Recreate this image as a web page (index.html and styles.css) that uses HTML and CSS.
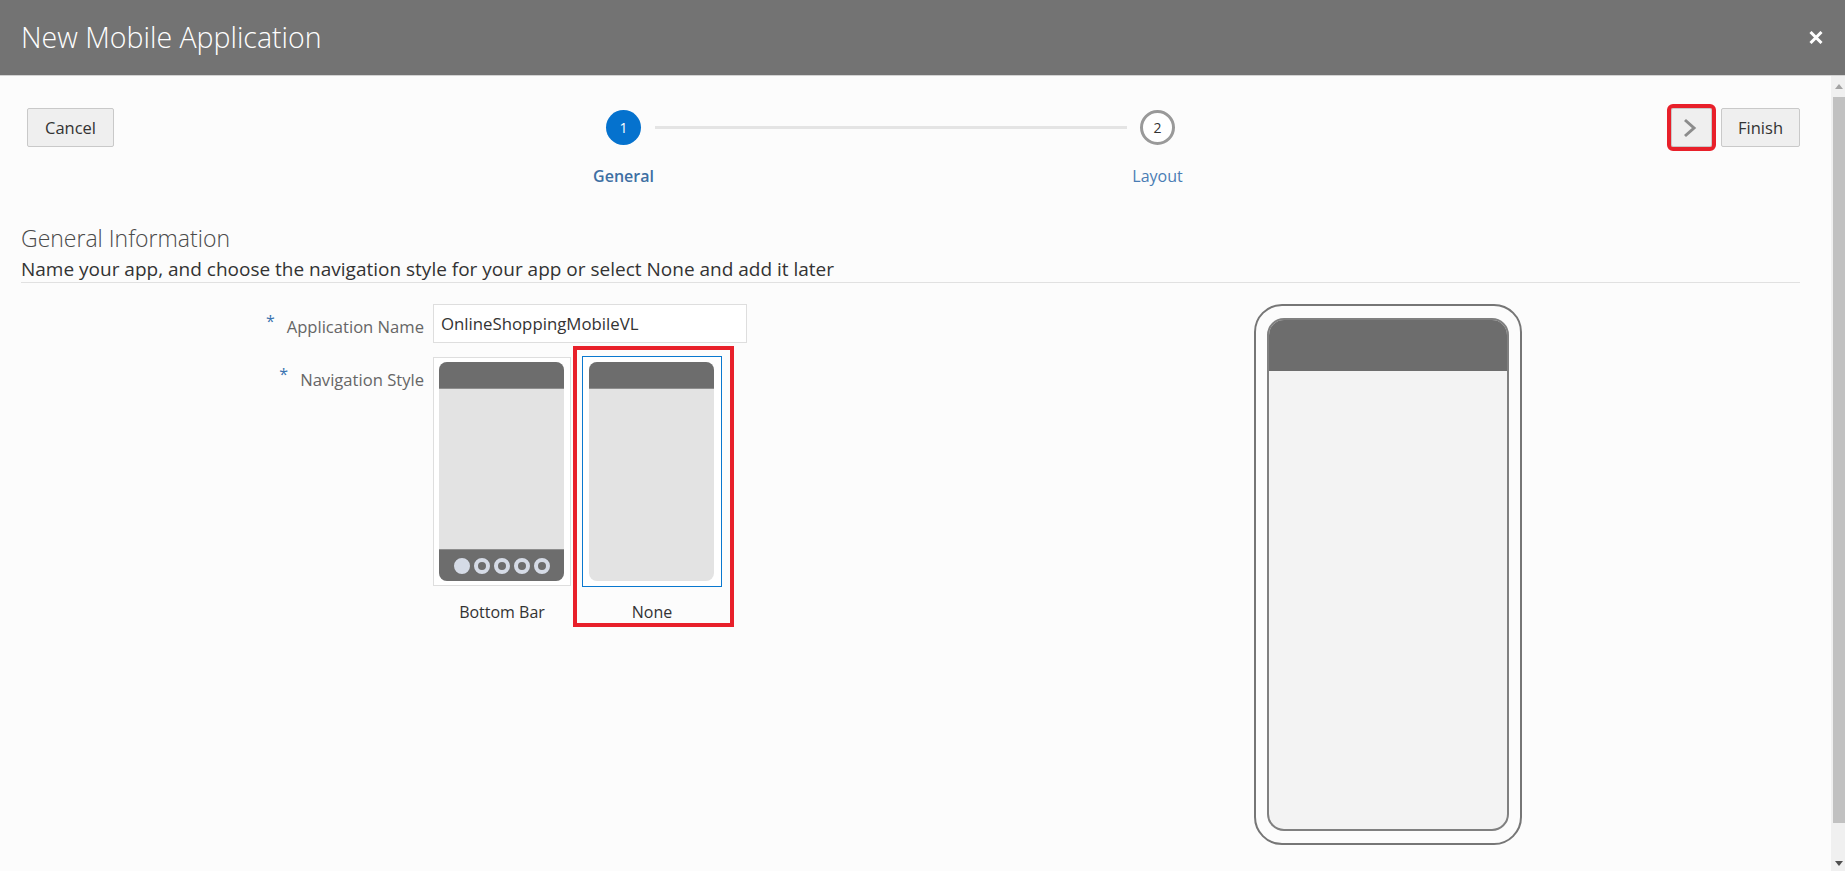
FILE: index.html
```html
<!DOCTYPE html>
<html lang="en">
<head>
<meta charset="utf-8">
<title>New Mobile Application</title>
<link rel="stylesheet" href="styles.css">
</head>
<body>
<div class="dialog">
  <header class="titlebar">
    <h1 class="title">New Mobile Application</h1>
    <button class="close" aria-label="Close">
      <svg width="14" height="13" viewBox="0 0 14 13"><path d="M1.5 1 L12.5 12 M12.5 1 L1.5 12" stroke="#fff" stroke-width="3" fill="none"/></svg>
    </button>
  </header>
  <div class="body">
    <main class="content">
      <div class="toolbar">
        <button class="btn">Cancel</button>
        <div class="train">
          <div class="step">
            <div class="step-dot"><span class="circle current">1</span></div>
            <div class="step-label current">General</div>
          </div>
          <div class="connector"></div>
          <div class="step">
            <div class="step-dot"><span class="circle">2</span></div>
            <div class="step-label">Layout</div>
          </div>
        </div>
        <div class="actions">
          <button class="btn btn-icon marked" aria-label="Next">
            <svg width="14" height="20" viewBox="0 0 14 20"><polyline points="2,2 11,10 2,18" stroke="#8c8c8c" stroke-width="3" fill="none"/></svg>
          </button>
          <button class="btn btn-finish">Finish</button>
        </div>
      </div>

      <section class="intro">
        <h2 class="heading">General Information</h2>
        <p class="caption">Name your app, and choose the navigation style for your app or select None and add it later</p>
      </section>

      <div class="panel">
        <div class="form">
          <label class="lbl"><span class="req">*</span>Application Name</label>
          <div class="input">OnlineShoppingMobileVL</div>

          <div class="lbl"><span class="req">*</span>Navigation Style</div>
          <div class="options">
            <div class="option">
              <div class="card">
                <div class="mini">
                  <div class="mini-top"></div>
                  <div class="mini-body"></div>
                  <div class="mini-bottom">
                    <span class="dot on"></span><span class="dot"></span><span class="dot"></span><span class="dot"></span><span class="dot"></span>
                  </div>
                </div>
              </div>
              <div class="opt-label">Bottom Bar</div>
            </div>
            <div class="option marked-box">
              <div class="card selected">
                <div class="mini">
                  <div class="mini-top"></div>
                  <div class="mini-body"></div>
                </div>
              </div>
              <div class="opt-label">None</div>
            </div>
          </div>
        </div>

        <div class="preview">
          <div class="phone">
            <div class="screen">
              <div class="screen-top"></div>
              <div class="screen-body"></div>
            </div>
          </div>
        </div>
      </div>
    </main>
    <div class="scrollbar">
      <div class="sb-btn">
        <svg width="8" height="5" viewBox="0 0 8 5"><polygon points="0,5 4,0 8,5" fill="#a3a3a3"/></svg>
      </div>
      <div class="sb-thumb"></div>
      <div class="sb-rest"></div>
      <div class="sb-btn sb-down">
        <svg width="8" height="5" viewBox="0 0 8 5"><polygon points="0,0 8,0 4,5" fill="#505050"/></svg>
      </div>
    </div>
  </div>
</div>
</body>
</html>
```

FILE: styles.css
```css
* { box-sizing: border-box; }

html, body {
  margin: 0;
  height: 100%;
  overflow: hidden;
}

body {
  font-family: "Open Sans", "Noto Sans", "Liberation Sans", sans-serif;
  background: #fcfcfc;
  color: #333;
}

.dialog {
  display: flex;
  flex-direction: column;
  height: 100vh;
}

/* Title bar */
.titlebar {
  flex: none;
  height: 76px;
  background: #737373;
  border-bottom: 1px solid #d3d3d3;
  display: flex;
  align-items: center;
  justify-content: space-between;
  padding: 0 22px 0 21px;
}

.title {
  margin: 0;
  font-size: 28.5px;
  font-weight: 300;
  color: #fff;
  line-height: 1;
}

.close {
  border: 0;
  background: transparent;
  padding: 0;
  display: flex;
  cursor: pointer;
}

/* Body */
.body {
  flex: 1;
  display: flex;
  min-height: 0;
}

.content {
  flex: 1;
  min-width: 0;
  padding: 32px 31px 0 21px;
}

/* Toolbar / train */
.toolbar {
  display: grid;
  grid-template-columns: auto 1fr auto;
  align-items: start;
  padding-left: 6px;
}

.btn {
  height: 39px;
  padding: 0 17px;
  background: #efefef;
  border: 1px solid #c9c9c9;
  border-radius: 2px;
  font-family: inherit;
  font-size: 16.5px;
  color: #333;
  cursor: pointer;
}

.btn-finish {
  padding: 0 16px;
}

.btn-icon {
  width: 41px;
  padding: 0 4px 0 0;
  display: flex;
  align-items: center;
  justify-content: center;
}

.marked {
  outline: 4px solid #e8202a;
  outline-offset: 0;
}

.actions {
  display: flex;
  gap: 9px;
}

.train {
  display: grid;
  grid-template-columns: 100px 434px 100px;
  justify-content: center;
  align-items: start;
  padding-right: 4px;
}

.step {
  display: flex;
  flex-direction: column;
  align-items: center;
}

.step-dot {
  height: 39px;
  display: flex;
  align-items: center;
}

.circle {
  width: 35px;
  height: 35px;
  border-radius: 50%;
  display: flex;
  align-items: center;
  justify-content: center;
  font-size: 14px;
  background: #fff;
  border: 3px solid #999;
  color: #333;
}

.circle.current {
  background: #0572ce;
  border: 0;
  color: #fff;
}

.step-label {
  margin-top: 18px;
  font-size: 16px;
  line-height: 22px;
  color: #4a7db4;
}

.step-label.current {
  font-weight: 600;
  color: #3e6fa3;
}

.connector {
  height: 3px;
  background: #e4e4e4;
  margin: 18px -19px 0;
}

/* Intro */
.intro {
  margin-top: 37px;
  border-bottom: 1px solid #e1e1e1;
}

.heading {
  margin: 0;
  font-size: 23px;
  line-height: 28px;
  font-weight: 300;
  color: #4a4a4a;
}

.caption {
  margin: 5px 0 0;
  font-size: 19px;
  line-height: 24px;
  color: #333;
  padding-bottom: 1px;
}

/* Panel */
.panel {
  margin-top: 21px;
  display: grid;
  grid-template-columns: 955px 1fr;
  align-items: start;
}

.form {
  display: grid;
  grid-template-columns: 403px auto;
  align-content: start;
  column-gap: 9px;
  row-gap: 14px;
  align-items: start;
}

.lbl {
  justify-self: end;
  padding-top: 9px;
  font-size: 16.6px;
  line-height: 22px;
  color: #666;
}

.req {
  color: #3a73b0;
  font-size: 16px;
  line-height: 1;
  vertical-align: 6px;
  margin-right: 12px;
}

.input {
  width: 314px;
  height: 39px;
  background: #fff;
  border: 1px solid #dedede;
  padding: 0 7px;
  display: flex;
  align-items: center;
  font-size: 16.8px;
  color: #333;
}

.options {
  display: flex;
  gap: 12px;
}

.option {
  width: 138px;
  display: flex;
  flex-direction: column;
  align-items: center;
}

.card {
  width: 138px;
  height: 229px;
  border: 1px solid #dedede;
  background: #fff;
  padding: 4px 6px 4px 5px;
}

.card.selected {
  width: 140px;
  height: 231px;
  margin: -1px;
  border-color: #0a78cf;
  padding: 5px 7px 5px 6px;
}

.mini {
  height: 219px;
  border-radius: 8px;
  overflow: hidden;
  background: #e3e3e3;
  display: flex;
  flex-direction: column;
}

.mini-top {
  height: 27px;
  background: #6d6d6d;
  border-bottom: 1px solid #8e8e8e;
}

.mini-body {
  flex: 1;
}

.mini-bottom {
  height: 32px;
  background: #6d6d6d;
  border-top: 1px solid #8e8e8e;
  display: flex;
  align-items: center;
  justify-content: center;
  gap: 4px;
}

.dot {
  width: 16px;
  height: 16px;
  border-radius: 50%;
  border: 4px solid #d5dbe6;
}

.dot.on {
  background: #d5dbe6;
}

.opt-label {
  margin-top: 15px;
  font-size: 16px;
  line-height: 22px;
  color: #333;
}

.marked-box {
  position: relative;
}

.marked-box::after {
  content: "";
  position: absolute;
  left: -10px;
  right: -13px;
  top: -11px;
  bottom: -4px;
  border: 4px solid #e8202a;
  pointer-events: none;
}

/* Preview */
.preview {
  display: flex;
  justify-content: center;
}

.phone {
  width: 268px;
  height: 541px;
  border: 2px solid #767676;
  border-radius: 28px;
  padding: 12px 11px;
  background: #fcfcfc;
}

.screen {
  height: 100%;
  border: 2px solid #808080;
  border-radius: 17px;
  overflow: hidden;
  background: #f3f3f3;
  display: flex;
  flex-direction: column;
}

.screen-top {
  height: 51px;
  background: #6d6d6d;
}

.screen-body {
  flex: 1;
}

/* Scrollbar */
.scrollbar {
  flex: none;
  width: 14px;
  background: #f0f0f0;
  display: flex;
  flex-direction: column;
  align-items: flex-end;
}

.sb-btn {
  width: 12px;
  height: 21px;
  display: flex;
  align-items: center;
  justify-content: center;
}

.sb-down {
  height: 14px;
  align-items: flex-start;
  padding-top: 4px;
}

.sb-thumb {
  width: 12px;
  height: 726px;
  background: #c1c1c1;
}

.sb-rest {
  flex: 1;
}
```
